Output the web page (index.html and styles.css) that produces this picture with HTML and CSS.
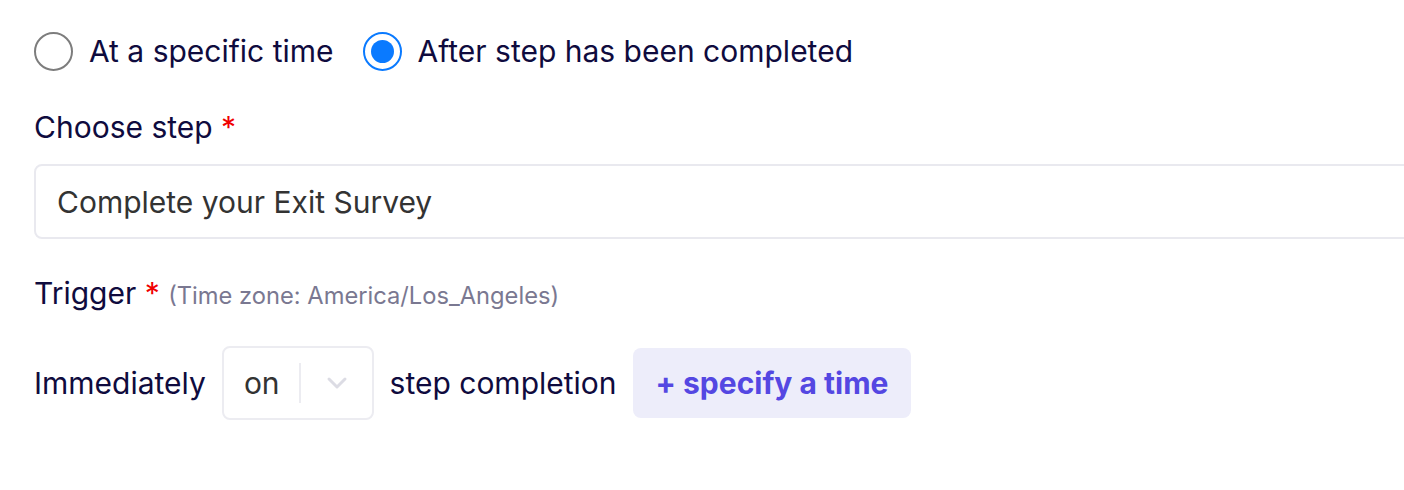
FILE: index.html
```html
<!DOCTYPE html>
<html lang="en">
<head>
    <meta charset="UTF-8">
    <meta name="viewport" content="width=device-width, initial-scale=1.0">
    <title>Schedule step</title>
    <link rel="stylesheet" href="styles.css">
</head>
<body>
    <div class="container">
        <div class="radio-row">
            <label class="radio">
                <span class="radio-circle"></span>
                <span>At a specific time</span>
            </label>
            <label class="radio checked">
                <span class="radio-circle"></span>
                <span>After step has been completed</span>
            </label>
        </div>

        <div class="form-group">
            <div class="field-label">Choose step <span class="required">*</span></div>
            <div class="text-input">Complete your Exit Survey</div>
        </div>

        <div class="form-group">
            <div class="field-label">Trigger <span class="required">*</span> <span class="hint">(Time zone: America/Los_Angeles)</span></div>
            <div class="trigger-row">
                <span>Immediately</span>
                <div class="select">
                    <span class="select-value">on</span>
                    <span class="select-divider"></span>
                    <svg class="chevron" width="22" height="14" viewBox="0 0 22 14">
                        <path d="M3 3 L11 11 L19 3" fill="none" stroke="#dcdce4" stroke-width="3" stroke-linecap="round" stroke-linejoin="round"/>
                    </svg>
                </div>
                <span>step completion</span>
                <button class="time-button">+ specify a time</button>
            </div>
        </div>
    </div>
</body>
</html>
```

FILE: styles.css
```css
body {
    font-family: Inter, "Noto Sans", sans-serif;
    margin: 0;
    padding: 0;
    background-color: #ffffff;
    color: #0f0b3e;
    font-size: 30px;
    overflow: hidden;
}
.container {
    padding: 31px 0 0 34px;
    width: 1500px;
}
.radio-row {
    display: flex;
    align-items: center;
    gap: 29px;
    height: 40px;
}
.radio {
    display: flex;
    align-items: center;
    gap: 16px;
}
.radio-circle {
    width: 35px;
    height: 35px;
    border: 2px solid #7d7d7d;
    border-radius: 50%;
    box-sizing: content-box;
    display: flex;
    align-items: center;
    justify-content: center;
}
.radio.checked .radio-circle {
    border-color: #0a7aff;
}
.radio.checked .radio-circle::after {
    content: "";
    width: 23px;
    height: 23px;
    border-radius: 50%;
    background: #0a7aff;
}
.form-group {
    margin-top: 36px;
}
.form-group + .form-group {
    margin-top: 34px;
}
.field-label {
    height: 40px;
    line-height: 40px;
}
.required {
    color: #f00000;
}
.hint {
    font-size: 23.7px;
    color: #7a7891;
}
.text-input {
    margin-top: 17px;
    height: 75px;
    box-sizing: border-box;
    border: 2px solid #e9e9ef;
    border-radius: 8px;
    padding-left: 21px;
    display: flex;
    align-items: center;
    color: #333333;
}
.trigger-row {
    display: flex;
    align-items: center;
    gap: 16px;
    margin-top: 33px;
}
.select {
    display: flex;
    align-items: center;
    height: 74px;
    box-sizing: border-box;
    border: 2px solid #ececf1;
    border-radius: 8px;
    padding: 0 24px 0 20px;
    color: #333333;
}
.select-divider {
    width: 2px;
    height: 40px;
    background: #ececf1;
    margin: 0 25px 0 19px;
}
.time-button {
    font-family: inherit;
    font-size: 30px;
    font-weight: 700;
    color: #5447e2;
    background: #ededfa;
    border: none;
    border-radius: 8px;
    height: 70px;
    padding: 0 23px;
}
```
